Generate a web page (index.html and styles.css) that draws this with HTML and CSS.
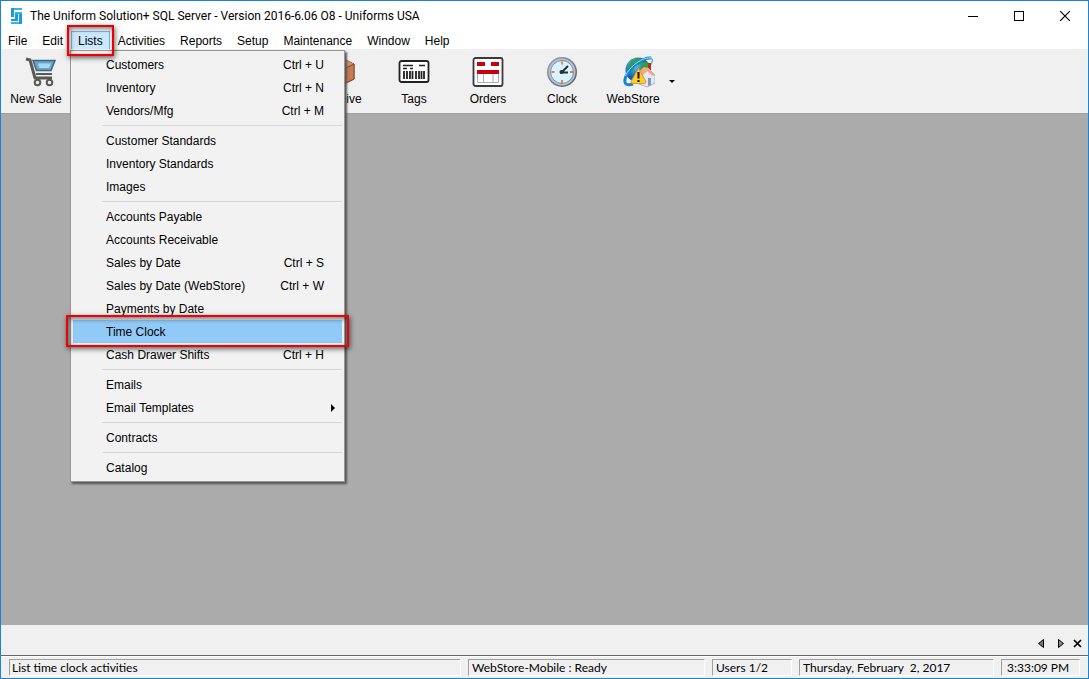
FILE: index.html
```html
<!DOCTYPE html>
<html lang="en">
<head>
<meta charset="utf-8">
<title>The Uniform Solution+ SQL Server</title>
<link rel="stylesheet" href="styles.css">
</head>
<body>
<div class="window">
  <header class="titlebar">
    <svg class="app-icon" viewBox="0 0 12 17" aria-hidden="true">
      <path d="M0 0h3v9H0zM4 4h3v9H0v-2h4zM8 4h3v12H8z" fill="#1b9ade"/>
      <path d="M3 0h8v2H3zM4 4h7v2H4zM0 14h8v2H0z" fill="#36b4ea"/>
    </svg>
    <h1 class="title">The Uniform Solution+ SQL Server - Version 2016-6.06 O8 - Uniforms USA</h1>
    <div class="window-controls">
      <button class="window-button" type="button" aria-label="Minimize"><svg viewBox="0 0 10 10" shape-rendering="crispEdges"><path d="M0 5.500h10" stroke="#000"/></svg></button>
      <button class="window-button" type="button" aria-label="Maximize"><svg viewBox="0 0 10 10" shape-rendering="crispEdges"><path d="M.5.5h9v9h-9z" fill="none" stroke="#000"/></svg></button>
      <button class="window-button" type="button" aria-label="Close"><svg viewBox="0 0 10 10"><path d="M0 0l10 10M10 0L0 10" stroke="#000" stroke-width="1.200"/></svg></button>
    </div>
  </header>

  <nav class="menubar" aria-label="Main menu">
    <button class="menu-button" type="button">File</button>
    <button class="menu-button" type="button">Edit</button>
    <div class="menu-holder">
      <button class="menu-button menu-button-open" type="button" aria-expanded="true">Lists</button>
      <span class="callout callout-menu"></span>
      <div class="dropdown" role="menu">
        <button class="item" type="button" role="menuitem"><span>Customers</span><span>Ctrl + U</span></button>
        <button class="item" type="button" role="menuitem"><span>Inventory</span><span>Ctrl + N</span></button>
        <button class="item" type="button" role="menuitem"><span>Vendors/Mfg</span><span>Ctrl + M</span></button>
        <hr class="separator">
        <button class="item" type="button" role="menuitem">Customer Standards</button>
        <button class="item" type="button" role="menuitem">Inventory Standards</button>
        <button class="item" type="button" role="menuitem">Images</button>
        <hr class="separator">
        <button class="item" type="button" role="menuitem">Accounts Payable</button>
        <button class="item" type="button" role="menuitem">Accounts Receivable</button>
        <button class="item" type="button" role="menuitem"><span>Sales by Date</span><span>Ctrl + S</span></button>
        <button class="item" type="button" role="menuitem"><span>Sales by Date (WebStore)</span><span>Ctrl + W</span></button>
        <button class="item" type="button" role="menuitem">Payments by Date</button>
        <button class="item item-active" type="button" role="menuitem">Time Clock<span class="callout callout-item"></span></button>
        <button class="item" type="button" role="menuitem"><span>Cash Drawer Shifts</span><span>Ctrl + H</span></button>
        <hr class="separator">
        <button class="item" type="button" role="menuitem">Emails</button>
        <button class="item item-parent" type="button" role="menuitem" aria-haspopup="true"><span>Email Templates</span><svg class="submenu-arrow" viewBox="0 0 4 8" aria-hidden="true"><path d="M0 0l4 4-4 4z"/></svg></button>
        <hr class="separator">
        <button class="item" type="button" role="menuitem">Contracts</button>
        <hr class="separator">
        <button class="item" type="button" role="menuitem">Catalog</button>
      </div>
    </div>
    <button class="menu-button" type="button">Activities</button>
    <button class="menu-button" type="button">Reports</button>
    <button class="menu-button" type="button">Setup</button>
    <button class="menu-button" type="button">Maintenance</button>
    <button class="menu-button" type="button">Window</button>
    <button class="menu-button" type="button">Help</button>
  </nav>

  <div class="toolbar">
    <button class="tool tool-sale" type="button">
      <svg class="tool-icon" viewBox="0 0 32 32" aria-hidden="true">
        <path d="M1 3l4 1 5 18h17" fill="none" stroke="#595955" stroke-width="3" stroke-linejoin="round"/>
        <path d="M8 4.500H30L26 14.500H11.500z" fill="#6ba6c6" stroke="#3c6680" stroke-width="1.500"/>
        <path d="M13 7.500h13l-2 4.500H14.500z" fill="#a9d9ee"/>
        <path d="M11 18h16" stroke="#595955" stroke-width="2"/>
        <circle cx="12.500" cy="26.500" r="2.800" fill="#eee" stroke="#595955" stroke-width="2"/>
        <circle cx="24.500" cy="26.500" r="2.800" fill="#eee" stroke="#595955" stroke-width="2"/>
      </svg>
      New Sale
    </button>
    <button class="tool tool-receive" type="button">
      <svg class="tool-icon" viewBox="0 0 32 32" aria-hidden="true">
        <path d="M4 8L18 2l12 6v15l-10 5L4 24z" fill="#bd6c46" stroke="#7b412b"/>
        <path d="M4 8l14-6 12 6-10 5z" fill="#d08f6b"/>
        <path d="M20 13l10-5v15l-10 5z" fill="#c87a52" stroke="#87482e"/>
      </svg>
      Receive
    </button>
    <button class="tool" type="button">
      <svg class="tool-icon" viewBox="0 0 32 32" aria-hidden="true">
        <rect x="1.500" y="5" width="29" height="21" rx="2" fill="#fff" stroke="#222" stroke-width="1.800"/>
        <path d="M5 9.500h10M21 9.500h6M5 12.500h4M12 12.500h3" stroke="#222" stroke-width="1.500"/>
        <path d="M6 15v8M9 15v8M12 15v8M14.500 15v8M18 15v8M21 15v8M23.500 15v8M26 15v8" stroke="#222" stroke-width="1.800"/>
      </svg>
      Tags
    </button>
    <button class="tool" type="button">
      <svg class="tool-icon" viewBox="0 0 32 32" aria-hidden="true">
        <rect x="1.500" y="2" width="29" height="28" rx="2" fill="#fff" stroke="#3a3a3a" stroke-width="1.800"/>
        <path d="M5 6h8v4H5zM19 6h8v4h-8zM5 14h22v4H5z" fill="#c9000c"/>
        <path d="M5.500 18v8.500h21V18M11.500 18v8M21 18v8" fill="none" stroke="#a7adba"/>
      </svg>
      Orders
    </button>
    <button class="tool" type="button">
      <svg class="tool-icon" viewBox="0 0 32 32" aria-hidden="true">
        <defs><linearGradient id="rim" x1="0" y1="0" x2="1" y2="1"><stop offset="0" stop-color="#9da7b3"/><stop offset="1" stop-color="#4f5965"/></linearGradient></defs>
        <circle cx="16" cy="16" r="15" fill="url(#rim)"/>
        <circle cx="16" cy="16" r="13.500" fill="#b9c2cc"/>
        <circle cx="16" cy="16" r="11.500" fill="#d9f2fd" stroke="#6d92ac"/>
        <path d="M16 5.500v3M16 24v3M5.500 16h3M24 16h3" stroke="#ee7834" stroke-width="1.800"/>
        <path d="M22 10l-6 6M14 16.500h8" fill="none" stroke="#273039" stroke-width="2"/>
        <circle cx="15.500" cy="16" r="2" fill="#273039"/>
      </svg>
      Clock
    </button>
    <button class="tool tool-web" type="button">
      <svg class="tool-icon" viewBox="0 0 32 32" aria-hidden="true">
        <defs><radialGradient id="globe" cx="35%" cy="30%"><stop offset="0" stop-color="#75c4f5"/><stop offset="1" stop-color="#0860b0"/></radialGradient></defs>
        <circle cx="15" cy="14" r="12.500" fill="url(#globe)"/>
        <path d="M9 4l7-2 4 2-3 4-5 2-2 5-4 1-1-6zM18 6l7 0 2 6-5 3-4-3z" fill="#2da14a"/>
        <path d="M28 2C20 1 7 11 3 20c-3 8 0 10 7 8" fill="none" stroke="#1685d0" stroke-width="3"/>
        <path d="M29 2C20 0 6 11 2.500 20" fill="none" stroke="#a5e3fb"/>
        <path d="M28 2c3 2 1 5-2 9" fill="none" stroke="#58bde9" stroke-width="1.500"/>
        <path d="M25 7h3v7h-3z" fill="#c62720"/>
        <path d="M17 18l8-6 7 7v8l-8 4-8-3z" fill="#e2e9f5" stroke="#a6b5d0"/>
        <path d="M14 17l7-6 4 1 7 7-2 1-6-5-6 6z" fill="#f6a679"/>
        <path d="M25 22h3v7l-3 1z" fill="#8094ba"/>
        <path d="M15.500 12.500l7.500 13q0 2-2 2H10q-2 0-2-2z" fill="#ffca32" stroke="#dba01c"/>
        <path d="M15.500 16v6.500M15.500 24v2" stroke="#111" stroke-width="2"/>
      </svg>
      WebStore
    </button>
    <button class="tool-drop" type="button" aria-label="WebStore options"><svg viewBox="0 0 6 3" aria-hidden="true"><path d="M0 0h6L3 3z"/></svg></button>
  </div>

  <main class="workspace"></main>

  <div class="tabstrip">
    <button class="tab-button" type="button" aria-label="Previous window"><svg viewBox="0 0 9 9"><path d="M6.500.5v8l-5-4z" fill="#777" stroke="#000"/></svg></button>
    <button class="tab-button" type="button" aria-label="Next window"><svg viewBox="0 0 9 9"><path d="M3.500.5v8l5-4z" fill="#888" stroke="#000"/></svg></button>
    <button class="tab-button" type="button" aria-label="Close window"><svg viewBox="0 0 9 9"><path d="M1 1l7 7M8 1L1 8" stroke="#000" stroke-width="1.700"/></svg></button>
  </div>

  <footer class="statusbar">
    <span class="panel panel-hint">List time clock activities</span>
    <span class="panel panel-service">WebStore-Mobile : Ready</span>
    <span class="panel panel-users">Users 1/2</span>
    <span class="panel panel-date">Thursday, February&nbsp; 2, 2017</span>
    <span class="panel panel-time">3:33:09 PM</span>
  </footer>
</div>
</body>
</html>
```

FILE: styles.css
```css
* { box-sizing: border-box; }

body {
  margin: 0;
  color: #000;
  font: 12px/16px "Liberation Sans", Arial, sans-serif;
}

button {
  margin: 0;
  padding: 0;
  border: 0;
  background: none;
  color: inherit;
  font: inherit;
}

svg { display: block; }

.window {
  display: flex;
  flex-direction: column;
  min-height: 100vh;
  border: 1px solid #1a82d7;
  background: #f0f0f0;
}

.titlebar {
  display: flex;
  align-items: center;
  height: 30px;
  padding-left: 10px;
  background: #fff;
}

.app-icon { width: 12px; height: 17px; }

.title {
  flex: 1;
  margin: 0 0 0 7px;
  font: 12px/16px Roboto, "Segoe UI", sans-serif;
  white-space: nowrap;
}

.window-controls { display: flex; }

.window-button {
  display: grid;
  place-items: center;
  width: 46px;
  height: 28px;
}

.window-button svg { width: 10px; height: 10px; }

.menubar {
  display: flex;
  gap: 1px;
  height: 18px;
  background: #fff;
}

.menu-holder { position: relative; }

.menu-button {
  height: 18px;
  padding: 2px 6px 0;
  border: 1px solid transparent;
  border-width: 0 1px;
  line-height: 16px;
  white-space: nowrap;
}

.menu-button-open {
  padding-top: 1px;
  border: 1px solid #7db7e8;
  border-bottom-width: 0;
  background: #cce8ff;
}

.dropdown {
  position: absolute;
  z-index: 2;
  top: 19px;
  left: -1px;
  width: 275px;
  padding: 2px;
  border: 1px solid #979797;
  background: #f2f2f2;
  box-shadow: 2px 2px 2px #555;
}

.item {
  display: flex;
  align-items: center;
  justify-content: space-between;
  position: relative;
  width: 100%;
  height: 23px;
  padding: 0 18px 0 33px;
  text-align: left;
  white-space: nowrap;
}

.item-active { background: #91c9f7; }

.item-parent { padding-right: 7px; }

.submenu-arrow { width: 4px; height: 8px; }

.separator {
  height: 1px;
  margin: 3px 0 3px 29px;
  border: 0;
  background: #d7d7d7;
}

.callout {
  position: absolute;
  z-index: 4;
  border: 2px solid #f00000;
  box-shadow: 1px 2px 5px rgba(0, 0, 0, .6), inset 1px 2px 5px rgba(0, 0, 0, .5);
  pointer-events: none;
}

.callout-menu { inset: -6px -4px -7px; }

.callout-item { inset: -5px -7px -4px; }

.toolbar {
  display: flex;
  height: 65px;
  border-bottom: 1px solid #a0a0a0;
}

.tool {
  display: flex;
  flex-direction: column;
  align-items: center;
  gap: 3px;
  width: 74px;
  padding-top: 7px;
  white-space: nowrap;
}

.tool-icon { width: 32px; height: 32px; }

.tool-sale { width: 70px; }

.tool-sale .tool-icon { margin-left: 10px; }

.tool-receive { margin-left: 232px; }

.tool-web { width: 68px; }

.tool-web .tool-icon { margin-left: 12px; }

.tool-drop { width: 10px; }

.tool-drop svg {
  width: 6px;
  height: 3px;
  margin: 0 auto;
}

.workspace {
  flex: 1;
  background: #ababab;
}

.tabstrip {
  display: flex;
  align-items: center;
  justify-content: flex-end;
  gap: 9px;
  height: 31px;
  padding: 6px 6px 0 0;
  border-bottom: 1px solid #696969;
}

.tab-button svg { width: 9px; height: 9px; }

.statusbar {
  display: flex;
  gap: 7px;
  height: 22px;
  padding: 2px 8px;
  border-top: 1px solid #fff;
  font: 12px/16px Lato, "Segoe UI", sans-serif;
}

.panel {
  padding-left: 3px;
  border: 1px solid #a0a0a0;
  border-right-color: #fff;
  border-bottom-color: #fff;
  line-height: 15px;
  white-space: nowrap;
}

.panel-hint { flex: 1; padding-left: 2px; }

.panel-service { width: 237px; }

.panel-users { width: 80px; }

.panel-date { width: 195px; }

.panel-time { width: 79px; padding-left: 5px; }
```
